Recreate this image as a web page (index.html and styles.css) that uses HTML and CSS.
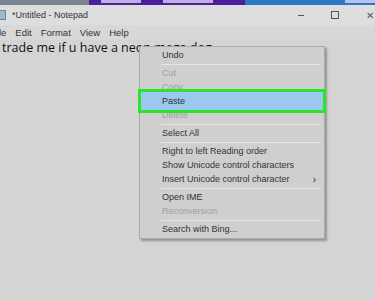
FILE: index.html
```html
<!DOCTYPE html>
<html lang="en">
  <head>
    <meta charset="UTF-8" />
    <title>Notepad</title>
    <link rel="stylesheet" href="styles.css">
  </head>
  <body>
    <div class="screen">
      <div class="top-strip">
        <div class="strip-gray"></div>
        <div class="strip-purple"><i class="mark w40"></i><i class="mark w50"></i></div>
        <div class="strip-blue"><i class="mark w30"></i></div>
      </div>
      <div class="title-bar">
        <div class="app-icon"></div>
        <span class="title-text">*Untitled - Notepad</span>
        <div class="win-btns">
          <span class="win-min"></span>
          <span class="win-max"></span>
          <span class="win-close">&#x2715;</span>
        </div>
      </div>
      <div class="menu-bar">
        <span class="menu-file">File</span>
        <span>Edit</span>
        <span>Format</span>
        <span>View</span>
        <span>Help</span>
      </div>
      <div class="editor">
        <p class="editor-text">trade me if u have a neon mega dog</p>
        <div class="context-menu">
          <div class="item">Undo</div>
          <div class="sep"></div>
          <div class="item disabled">Cut</div>
          <div class="item disabled">Copy</div>
          <div class="item active">Paste</div>
          <div class="item disabled">Delete</div>
          <div class="sep"></div>
          <div class="item">Select All</div>
          <div class="sep"></div>
          <div class="item">Right to left Reading order</div>
          <div class="item">Show Unicode control characters</div>
          <div class="item">Insert Unicode control character<span class="arrow">&#x203A;</span></div>
          <div class="sep"></div>
          <div class="item">Open IME</div>
          <div class="item disabled">Reconversion</div>
          <div class="sep"></div>
          <div class="item">Search with Bing...</div>
        </div>
      </div>
    </div>
  </body>
</html>
```

FILE: styles.css
```css
body {
  margin: 0;
  background-color: #d2d2d2;
  font-family: "Liberation Sans", Arial, sans-serif;
}
.screen {
  width: 375px;
  height: 300px;
  overflow: hidden;
  display: flex;
  flex-direction: column;
  background-color: #d2d2d2;
}
.top-strip {
  display: flex;
  height: 5px;
  overflow: hidden;
}
.strip-gray {
  width: 92px;
  background-color: #7c8494;
}
.strip-purple {
  width: 150px;
  display: flex;
  gap: 22px;
  padding-left: 12px;
  background-color: #4d1f9c;
}
.strip-blue {
  flex: 1;
  display: flex;
  padding-left: 100px;
  background-color: #2b78c9;
}
.mark {
  height: 3px;
  background-color: #dcd6f0;
  opacity: 0.8;
}
.w30 { width: 30px; }
.w40 { width: 40px; }
.w50 { width: 50px; }
.title-bar {
  height: 20px;
  display: flex;
  align-items: center;
  background-color: #dedede;
  font-size: 9px;
  color: #333;
}
.app-icon {
  width: 5px;
  height: 8px;
  margin-right: 6px;
  background-color: #9fb9cc;
  border: 1px solid #6f8797;
  border-left: none;
}
.win-btns {
  margin-left: auto;
  display: flex;
  align-items: center;
}
.win-min {
  width: 6px;
  height: 1px;
  margin-right: 27px;
  background-color: #555;
}
.win-max {
  width: 6px;
  height: 6px;
  margin-right: 27px;
  border: 1px solid #555;
}
.win-close {
  width: 9px;
  font-size: 10px;
  color: #555;
}
.menu-bar {
  height: 15px;
  display: flex;
  align-items: center;
  gap: 9px;
  background-color: #d8d8d8;
  font-size: 9.5px;
  color: #333;
}
.menu-file {
  margin-left: -9px;
}
.editor {
  flex: 1;
  position: relative;
  background-color: #d4d4d4;
}
.editor-text {
  margin: 0;
  padding: 1px 0 0 2px;
  font-family: "Open Sans", sans-serif;
  font-size: 12.5px;
  line-height: 14px;
  color: #111;
}
.context-menu {
  position: absolute;
  left: 139px;
  top: 6px;
  width: 184px;
  padding: 1px 0 2px;
  background-color: #cfcfcf;
  border: 1px solid #a9a9a9;
  box-shadow: 2px 2px 2px rgba(0, 0, 0, 0.3);
  font-size: 9px;
  color: #333;
}
.item {
  display: flex;
  align-items: center;
  height: 14px;
  margin: 0 3px;
  padding-left: 19px;
}
.item.disabled {
  color: #a0a0a0;
}
.item.active {
  background-color: #9ac8ef;
  box-shadow: 0 0 0 2px #9ac8ef;
  outline: 3px solid #2ee32e;
  outline-offset: 2px;
}
.arrow {
  margin-left: auto;
  margin-right: 5px;
  font-size: 10px;
}
.sep {
  height: 1px;
  margin: 2px 3px 1px 21px;
  background-color: #e6e6e6;
}
```
